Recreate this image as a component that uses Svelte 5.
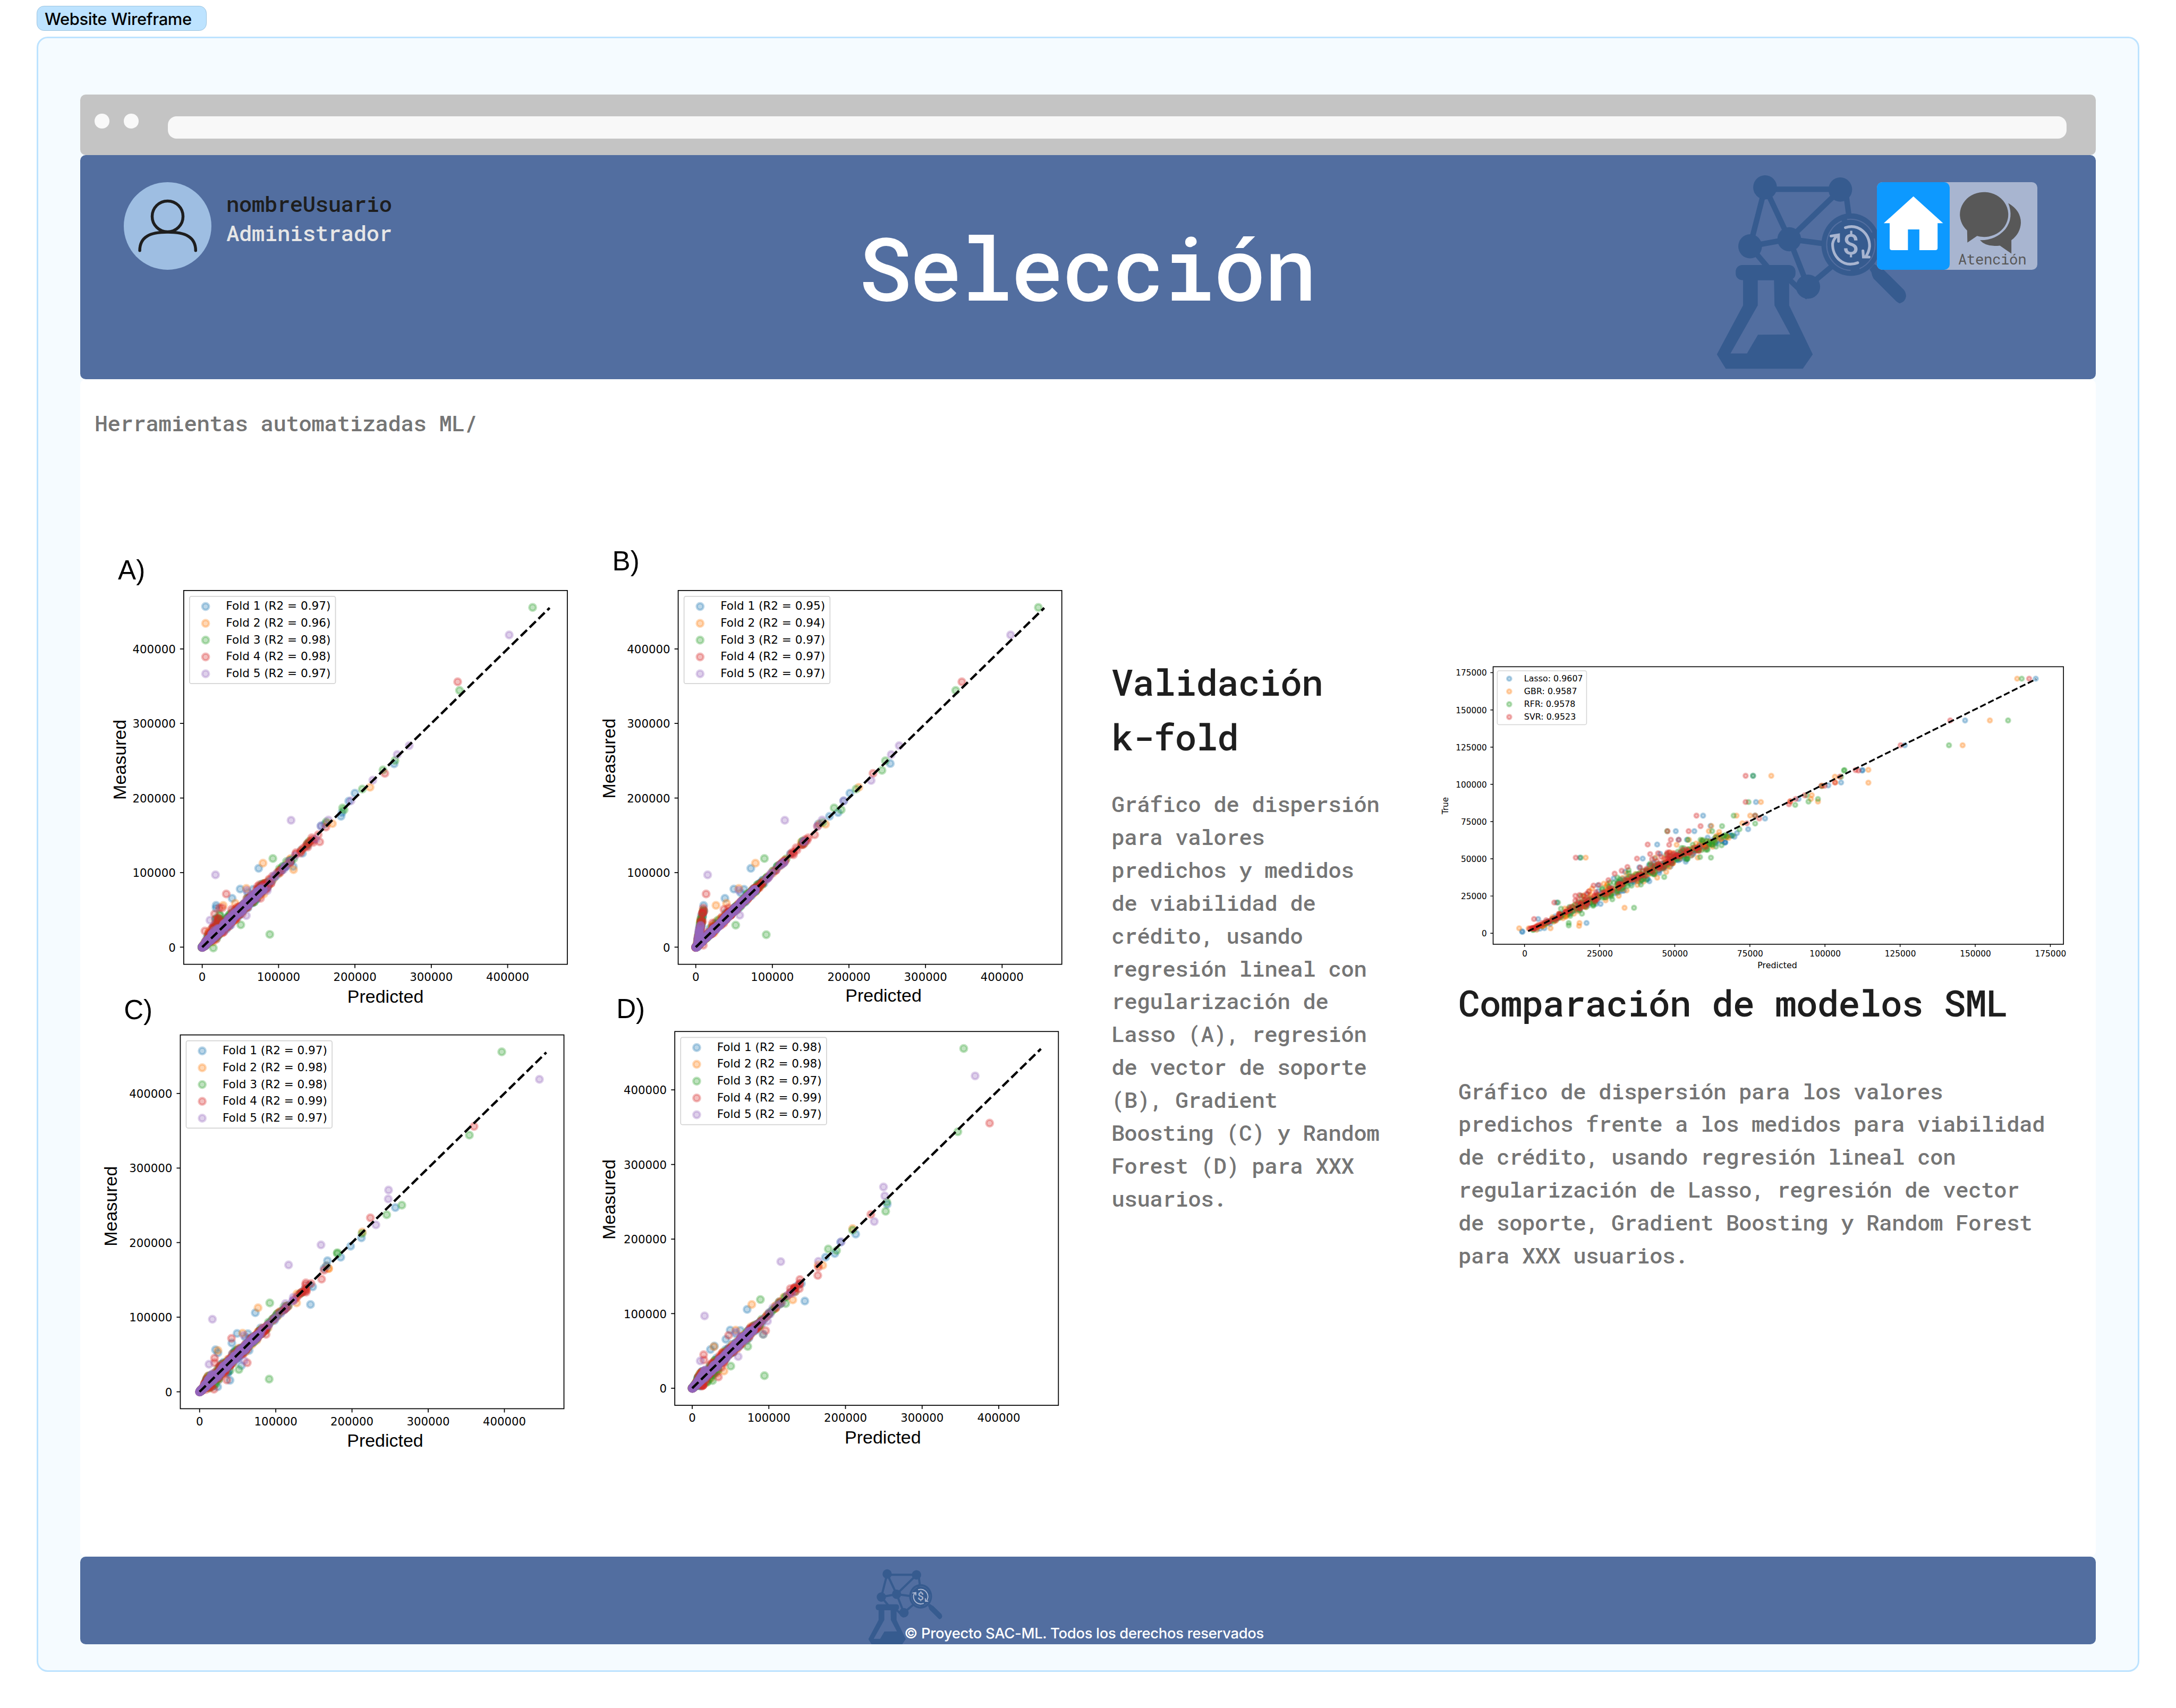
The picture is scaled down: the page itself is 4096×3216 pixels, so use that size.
<script>
  const COLORS = ['#1f77b4', '#ff7f0e', '#2ca02c', '#d62728', '#9467bd'];

  // Small deterministic generator so that the clouds are stable between renders
  function rng(seed) {
    let s = seed;
    return () => {
      s = (s * 1664525 + 1013904223) % 4294967296;
      return s / 4294967296;
    };
  }
  function gauss(r) {
    return Math.sqrt(-2 * Math.log(r() + 1e-9)) * Math.cos(6.28318 * r());
  }

  const panels = [
    {
      id: 'A', lx: 57, ly: 132, bx: 270, by: 168.5, zx: 330, zy: 1325, kx: 247.5, px: 924, py: 1505, mx: 82, my: 717, seed: 11, spread: 1, column: false,
      r2: ['0.97', '0.96', '0.98', '0.98', '0.97'],
      pts: [
        [513,1069,453,1136,427,1166,375,1189,375,1198,495,1137,477,1147,825,825,805,851,780,900,783,888,952,730,728,925,715,931,625,1063,655,1020,520,1128],
        [527,1052,473,1134,626,1073,874,806,752,924,398,1189,437,1182,735,922,617,1037],
        [1401,223,1164,492,559,1037,549,1283,455,1252,366,1327,916,750,955,719,849,812,785,873,790,879,732,918,676,982,580,1070,386,1219,388,1222],
        [1158,464,408,1152,922,761,731,935,706,960,711,983,685,970,634,1018,370,1217,395,1197,425,1202,339,1272,690,985,672,1000,386,1197,519,1166],
        [1325,312,618,913,373,1090,1001,671,962,700,883,783,812,850,739,912,715,932,473,1222,541,1141,355,1237,475,1140]
      ]
    },
    {
      id: 'B', lx: 63, ly: 103, bx: 276.5, by: 168.5, zx: 333.5, zy: 1325, kx: 248.25, px: 942, py: 1502, mx: 73, my: 713, seed: 23, spread: 0.45, column: true,
      r2: ['0.95', '0.94', '0.97', '0.97', '0.97'],
      pts: [
        [512,1069,457,1136,428,1166,359,1189,490,1137,479,1148,833,825,813,850,795,888,767,900,964,729,640,1022,731,925],
        [527,1052,473,1134,399,1189,433,1182,862,806,754,926,735,925],
        [1444,223,1176,492,556,1037,562,1284,463,1253,948,720,937,751,853,812,782,873,805,879,745,920,680,980],
        [1196,464,367,1152,908,761,719,960,358,1198,728,933,698,970,689,975,425,1202,440,1197,358,1318,650,1025,388,1246],
        [1354,312,622,913,372,1090,993,671,967,700,902,784,813,850,743,912,728,932,476,1221,473,1140]
      ]
    },
    {
      id: 'C', lx: 76, ly: 109, bx: 259, by: 159.5, zx: 321.5, zy: 1316.5, kx: 247, px: 923, py: 1495, mx: 54, my: 715, seed: 37, spread: 0.75, column: false,
      r2: ['0.97', '0.98', '0.98', '0.99', '0.97'],
      pts: [
        [502,1060,443,1127,426,1158,373,1180,381,1190,478,1128,470,1140,681,1033,688,976,779,880,736,891,811,844,846,817,956,719,457,1231,420,1279,380,1300,725,916,482,1182],
        [511,1044,461,1126,849,798,739,916,636,1028,381,1182,447,1175,740,917],
        [1301,214,1196,484,549,1028,547,1275,449,1244,977,711,928,742,848,803,768,865,768,868,733,908],
        [1211,456,425,1143,875,752,717,951,666,963,476,1222,370,1207,667,993,368,1308,410,1278,537,1130,370,1222,665,970,725,922,640,1005],
        [1423,303,610,905,363,1081,934,662,933,691,893,775,715,840,733,908,466,1215,465,1133,352,1227,625,1010,600,1030]
      ]
    },
    {
      id: 'D', lx: 76, ly: 105, bx: 265.5, by: 148.5, zx: 322, zy: 1305, kx: 248.4, px: 940, py: 1485, mx: 73, my: 693, seed: 53, spread: 0.75, column: false,
      r2: ['0.98', '0.98', '0.97', '0.99', '0.97'],
      pts: [
        [500,1049,445,1116,431,1146,394,1168,381,1179,478,1117,687,1022,463,1128,852,805,803,831,784,868,754,880,954,708,676,965],
        [515,1033,463,1116,842,787,745,906,648,1018,425,1249,392,1170,730,905],
        [1202,203,1183,473,543,1017,556,1264,447,1233,953,701,949,731,842,792,763,853,790,858,502,1169,625,1030,655,992,388,1280,552,1130],
        [1286,445,440,1133,901,741,729,939,671,952,560,1118,359,1196,669,982,360,1213,353,1298,407,1268,731,912,640,982,670,965],
        [1239,292,609,894,362,1070,942,652,946,681,912,764,805,830,731,893,471,1202,566,1087,552,1130,348,1216,463,1122,495,1150]
      ]
    }
  ];

  function pairs(flat, sx = 1, sy = 1) {
    const out = [];
    for (let i = 0; i < flat.length; i += 2) out.push([flat[i] * sx, flat[i + 1] * sy]);
    return out;
  }

  const KY = 241.8;

  // Dense part of each fold: values in thousands along the diagonal
  function foldCloud(p) {
    const r = rng(p.seed);
    return p.pts.map((flat, f) => {
      const out = [];
      const put = (pred, val) => out.push([p.zx + (pred * p.kx) / 100, p.zy - (val * KY) / 100]);
      const tight = f === 4;
      for (let i = 0; i < (tight ? 460 : 200); i++) {
        const v = (tight ? 78 : 86) * Math.pow(r(), 1.35);
        put(v + gauss(r) * (tight ? 2.1 : 3.2) * p.spread * Math.min(1, 0.1 + v / 20), v);
      }
      for (let i = 0; i < 15; i++) {
        const v = 72 + r() * 46;
        put(v + gauss(r) * 1.7 * p.spread, v + (f === 2 ? 1 : 0));
      }
      for (let i = 0; i < (f === 3 ? 9 : 2); i++) {
        const v = 122 + r() * 24;
        put(v + gauss(r) * 1.7, v);
      }
      if (p.column) {
        for (let i = 0; i < 28; i++) {
          const v = (tight ? 30 : 50) * r();
          put(1.5 + v * 0.16 + gauss(r) * 0.6, v);
        }
        if (!tight) for (let i = 0; i < 8; i++) { const v = 24 + r() * 26; put(v - 2 - r() * 6, v); }
      } else if (!tight) {
        const wide = p.id === 'A';
        for (let i = 0; i < (wide ? 18 : 14); i++) {
          const v = 7 + r() * (wide ? 34 : 16);
          put(Math.max(1.5, v * (wide ? 0.42 : 0.5) + r() * (wide ? 9 : 6)), v);
        }
        for (let i = 0; i < (wide ? 4 : 8); i++) {
          const v = 3 + r() * (wide ? 35 : 26);
          put(v + 4 + r() * (wide ? 4 : 8), v);
        }
        for (let i = 0; i < 8; i++) {
          const v = 30 + r() * 28;
          put(v - 3 - r() * 6, v);
        }
      } else {
        for (let i = 0; i < 20; i++) { const v = 5 + r() * 20; put(v * 0.65 + 1, v); }
      }
      return out.concat(pairs(flat));
    });
  }
  const foldPlots = panels.map((p) => ({ ...p, folds: foldCloud(p) }));
  const ticks = [0, 100000, 200000, 300000, 400000];

  // Model comparison chart
  const models = ['Lasso: 0.9607', 'GBR: 0.9587', 'RFR: 0.9578', 'SVR: 0.9523'];
  const modelFlat = [
    [1459,91,1288,266,1142,370,1040,474,1039,476,988,526,775,498,957,538,782,608,654,665,804,677,588,730,633,730,543,786,672,708,763,722,356,841,508,845,300,1029,217,1152,216,1150,372,1115,255,1098,736,738,885,595,595,766,615,766,550,825,612,858,524,940,406,1035,523,872,535,865],
    [1414,91,1348,266,1282,370,1054,473,1054,527,819,498,794,608,917,579,915,595,932,606,370,841,464,1051,209,1137,285,1137,232,1137,355,1115,354,1127,735,665,768,665,668,730,693,733,674,708,749,697,325,1058,543,925,641,841,973,502,590,787,620,766,942,540,865,606,974,526],
    [1425,91,1392,266,1249,370,996,474,995,476,775,498,764,608,932,595,909,606,728,665,700,709,676,730,567,730,780,698,742,722,673,841,487,1051,329,1115,329,1125,358,841,358,1001,303,1029,617,766,648,766,560,922,361,1076,629,787,388,1043,780,665,877,620,905,580,410,970,941,541,988,502],
    [1443,91,1252,266,1132,370,1023,474,1030,476,757,498,757,608,638,665,648,709,568,730,619,730,576,766,520,786,572,787,346,841,494,845,526,826,545,823,345,1001,345,1021,294,1029,245,1098,389,958,377,983,440,908,425,935,457,896,471,880,780,665,790,677,305,1076,595,766,402,955,567,825,760,697,865,605,862,617,878,595,900,580,940,540,948,540,973,526,985,502]
  ];
  const r5 = rng(97);
  const shift = [0.9, 0.6, 0.9, -0.3];
  const modelPts = modelFlat.map((flat, m) => {
    const out = [];
    for (let i = 0; i < 150; i++) {
      const v = 2 + (m === 3 ? 58 : 64) * Math.pow(r5(), 0.95);
      const pred = v + shift[m] + gauss(r5) * (m === 3 ? 1.6 : 2.3) * Math.min(1, 0.2 + v / 28);
      out.push([201 + pred * 6.584, 605.6 - v * 3.264]);
    }
    for (let i = 0; i < 14; i++) {
      const v = 24 + r5() * 32;
      out.push([201 + (v - 2 - r5() * 6) * 6.584, 605.6 - v * 3.264]);
    }
    return out.concat(pairs(flat, 0.9056, 0.523));
  });
  const modelTicks = [0, 25000, 50000, 75000, 100000, 125000, 150000, 175000];

  const kfoldText = `Gráfico de dispersión
para valores
predichos y medidos
de viabilidad de
crédito, usando
regresión lineal con
regularización de
Lasso (A), regresión
de vector de soporte
(B), Gradient
Boosting (C) y Random
Forest (D) para XXX
usuarios.`;
  const modelsText = `Gráfico de dispersión para los valores
predichos frente a los medidos para viabilidad
de crédito, usando regresión lineal con
regularización de Lasso, regresión de vector
de soporte, Gradient Boosting y Random Forest
para XXX usuarios.`;
</script>

{#snippet logo()}
  <g fill="#365b8f" stroke="none">
    <g stroke="#365b8f" stroke-width="12" fill="none">
      <path d="M167 75H332M167 71 134 200M167 71 220 184M332 76 220 184M343 75 353 150M134 200 220 184M220 184 310 196M220 184 261 288M261 288 330 230M134 200 185 260M215 268 261 312" />
    </g>
    <ellipse cx="167" cy="70.7" rx="26" ry="26.5" />
    <ellipse cx="331.8" cy="75.5" rx="26" ry="26.5" />
    <ellipse cx="134.3" cy="200" rx="26" ry="26.5" />
    <ellipse cx="220" cy="184.5" rx="26" ry="26.5" />
    <ellipse cx="261.2" cy="288.3" rx="26.5" ry="26.5" />
    <ellipse cx="355" cy="196.3" rx="64.5" ry="68.6" />
    <path d="M406.4 239 427.6 252 471 295Q476 301 476 310Q474 322 462 325Q456 323 450.6 316.7L404.7 270.7Q401 264 400 256.7L396 250.7Z" />
    <rect x="102.7" y="241" width="131" height="33" rx="14" />
    <path fill-rule="evenodd" d="M118.8 270H219.8V329.3L271.5 436.7 249.7 468.3H80.9L61.4 436.7 118.8 329.3ZM151 274V329.3L91.3 434.7H127.4L151.5 393.8 222.1 393.3 187.7 329.3 186.6 274Z" />
  </g>
  <ellipse cx="355" cy="196.5" rx="53" ry="56" fill="none" stroke="#526ea0" stroke-width="2.4" stroke-dasharray="66 20 150 12 66 14 20" />
  <g fill="none" stroke="#a8b5d0" stroke-width="6" stroke-linecap="round">
    <path d="M343 159C372 150 396 172 396 200Q395 212 388 222M370 236C338 248 314 222 315 194Q317 184 324 178M311.5 177.5 328 175 328 189M381.5 210 382.5 223.5 395 223.5" />
  </g>
  <text x="355" y="218" text-anchor="middle" font-weight="500" font-size="63">$</text>
{/snippet}

<div class="screen">
  <div class="tag">Website Wireframe</div>
  <div class="frame">
    <div class="chrome">
      <i class="dot"></i>
      <i class="dot"></i>
      <div class="url"></div>
    </div>
    <header>
      <svg class="mark" viewBox="0 0 500 492">{@render logo()}</svg>
      <div class="user">
        <svg class="avatar" viewBox="0 0 192 192">
          <circle cx="96" cy="96" r="96" fill="#9ebee2" />
          <g fill="none" stroke="#1e1e1e" stroke-width="6.4" stroke-linecap="round">
            <circle cx="96" cy="75" r="33.8" />
            <path d="M35 150C35 120 57 109.5 96 109.5S157.500 120 157.500 150" />
          </g>
        </svg>
        <div class="who">
          <div class="name">nombreUsuario</div>
          <div class="role">Administrador</div>
        </div>
      </div>
      <h1>Selección</h1>
      <div class="actions">
        <div class="home">
          <svg viewBox="0 0 160 192"><path fill="#fff" d="M80 31 145 90H133V144Q133 149 128 149H93V103.500H68V149H33Q28 149 28 144V90H15Z" /></svg>
        </div>
        <div class="help">
          <svg viewBox="0 0 192 192">
            <g fill="#585858">
              <path d="M38.200 106A53 49.200 0 1 1 60 118L38.800 132.300Z" />
              <path d="M128.300 46Q156 62 156 89Q155 112 135.200 127.300V156.700L110 139Q80 143 66.300 127.300Q100 128 122 103Q141 78 128.300 46Z" />
            </g>
          </svg>
          <span>Atención</span>
        </div>
      </div>
    </header>
    <main>
      <p class="crumb">Herramientas automatizadas ML/</p>
      <div class="content">
        <div class="folds">
          {#each foldPlots as p}
            <svg class="fold" viewBox="0 0 1568 1449.700">
              <text class="arial letter" x={p.lx} y={p.ly}>{p.id})</text>
              {#each p.folds as pts, f}
                <g class="pt" fill={COLORS[f]} stroke={COLORS[f]}>
                  {#each pts as [x, y]}<circle cx={x.toFixed(1)} cy={(y + 0.5).toFixed(1)} r="10.800" />{/each}
                </g>
              {/each}
              <line class="fit" x1={p.zx} y1={p.zy} x2={p.zx + p.kx * 4.55} y2={p.zy - KY * 4.55} />
              <rect class="axes" x={p.bx} y={p.by} width="1243.500" height="1212" />
              {#each ticks as t}
                <path class="tick" d="M{p.zx + (p.kx * t) / 1e5} {p.by + 1212}v12M{p.bx} {p.zy - (KY * t) / 1e5}h-12" />
                <text x={p.zx + (p.kx * t) / 1e5} y={p.by + 1266} text-anchor="middle">{t}</text>
                <text x={p.bx - 26} y={p.zy - (KY * t) / 1e5 + 14} text-anchor="end">{t}</text>
              {/each}
              <rect class="legend" x={p.bx + 19} y={p.by + 19} width="473" height="283" rx="6" />
              {#each p.r2 as v, i}
                <g class="pt" fill={COLORS[i]} stroke={COLORS[i]}><circle cx={p.bx + 71} cy={p.by + 52 + i * 54.500} r="10.800" /></g>
                <text class="key" x={p.bx + 137} y={p.by + 63 + i * 54.500}>Fold {i + 1} (R2 = {v})</text>
              {/each}
              <text class="arial" x={p.px} y={p.py} text-anchor="middle">Predicted</text>
              <text class="arial" transform="translate({p.mx} {p.my}) rotate(-90)" text-anchor="middle">Measured</text>
            </svg>
          {/each}
        </div>
        <section class="kfold">
          <h2>Validación<br />k-fold</h2>
          <p>{kfoldText}</p>
        </section>
        <section class="models">
          <svg class="compare" viewBox="0 0 1420 700">
            {#each modelPts as pts, m}
              <g class="pt small" fill={COLORS[m]} stroke={COLORS[m]}>
                {#each pts as [x, y]}<circle cx={x.toFixed(1)} cy={y.toFixed(1)} r="4.800" />{/each}
              </g>
            {/each}
            <line class="fit thin" x1="209" y1="601" x2="1322" y2="48.500" />
            <rect class="axes thin" x="132.200" y="21.400" width="1249.800" height="608.300" />
            {#each modelTicks as t}
              <path class="tick thin" d="M{201 + (t / 25000) * 164.600} 629.700v6M132.200 {605.600 - (t / 25000) * 81.600}h-6" />
              <text x={201.5 + (t / 25000) * 164.600} y="656.500" text-anchor="middle">{t}</text>
              <text x="118.500" y={612.500 - (t / 25000) * 81.600} text-anchor="end">{t}</text>
            {/each}
            <rect class="legend thin" x="141.300" y="30.300" width="195.700" height="118.200" rx="4" />
            {#each models as name, i}
              <g class="pt small" fill={COLORS[i]} stroke={COLORS[i]}><circle cx="167.500" cy={47.600 + i * 28} r="4.800" /></g>
              <text class="key" x="200" y={53 + i * 28}>{name}</text>
            {/each}
            <text class="key" x="755" y="682.500" text-anchor="middle">Predicted</text>
            <text transform="translate(34 326) rotate(-90)" text-anchor="middle">True</text>
          </svg>
          <h2>Comparación de modelos SML</h2>
          <p>{modelsText}</p>
        </section>
      </div>
    </main>
    <footer>
      <svg class="mark" viewBox="0 0 500 492">{@render logo()}</svg>
      <span>© Proyecto SAC-ML. Todos los derechos reservados</span>
    </footer>
  </div>
</div>

<style>
  /* 1rem is one hundred design units */
  :global(html) { font-size: 85.906px; }
  :global(body) { margin: 0; background: #fff; }
  .screen {
    box-sizing: border-box;
    width: 47.68rem;
    height: 37.43rem;
    padding: 0.125rem 0.8rem 0;
    overflow: hidden;
    font-family: 'Roboto Mono', 'DejaVu Sans Mono', monospace;
    font-size: 0.48rem;
    font-weight: 500;
    letter-spacing: -0.0086rem;
  }
  .tag {
    box-sizing: border-box;
    width: 3.73rem;
    height: 0.555rem;
    padding-left: 0.165rem;
    border: 0.02rem solid #9cc3df;
    border-radius: 0.16rem;
    background: #bde3ff;
    font: 500 0.36rem/0.57rem Inter, sans-serif;
    letter-spacing: -0.004rem;
    white-space: nowrap;
  }
  .frame {
    box-sizing: border-box;
    height: 35.84rem;
    margin-top: 0.12rem;
    padding: 1.24rem 0.92rem 0;
    border: 0.04rem solid #bde3ff;
    border-radius: 0.24rem;
    background: #f5fbff;
  }
  .chrome {
    display: flex;
    box-sizing: border-box;
    height: 1.32rem;
    padding: 0.42rem 0.64rem 0 0.32rem;
    border-radius: 0.12rem;
    background: #c4c4c4;
  }
  .dot {
    width: 0.32rem;
    height: 0.32rem;
    margin-right: 0.32rem;
    border-radius: 50%;
    background: #f9f9f9;
  }
  .url {
    flex: 1;
    height: 0.48rem;
    margin: 0.06rem 0 0 0.32rem;
    border-radius: 0.19rem;
    background: #f8f8f8;
  }
  header {
    position: relative;
    display: grid;
    grid-template-columns: 1fr auto 1fr;
    height: 4.92rem;
    border-radius: 0.12rem;
    background: #526ea0;
  }
  header .mark {
    position: absolute;
    top: 0;
    right: 3.92rem;
    width: 5rem;
    height: 4.92rem;
  }
  .user {
    display: flex;
    gap: 0.32rem;
    padding: 0.6rem 0 0 0.96rem;
  }
  .avatar { width: 1.92rem; height: 1.92rem; }
  .who { line-height: 0.64rem; padding-top: 0.152rem; }
  .name { color: #1e1e1e; }
  .role { color: #e6e6e6; }
  h1 {
    margin: -0.01rem 0 0 -0.05rem;
    font-size: 1.92rem;
    font-weight: 500;
    line-height: 4.92rem;
    letter-spacing: -0.042rem;
    color: #fff;
  }
  .actions {
    position: relative;
    display: flex;
    justify-self: end;
    width: 3.52rem;
    height: 1.92rem;
    margin: 0.6rem 1.28rem 0 0;
    border-radius: 0.12rem;
    background: #a8b5d0;
  }
  .home { width: 1.6rem; border-radius: 0.12rem; background: #0d99ff; }
  .home svg { display: block; width: 1.6rem; height: 1.92rem; }
  .help { position: relative; width: 1.92rem; }
  .help svg { display: block; width: 1.92rem; height: 1.92rem; }
  .help span {
    position: absolute;
    left: 0.18rem;
    bottom: 0;
    font-size: 0.32rem;
    font-weight: 400;
    line-height: 0.48rem;
    letter-spacing: -0.005rem;
    color: #585858;
  }
  main {
    box-sizing: border-box;
    height: 25.8rem;
    border-radius: 0.12rem;
    background: #fff;
    overflow: hidden;
  }
  .crumb { margin: 0; padding: 0.605rem 0 0 0.32rem; line-height: 0.72rem; color: #757575; }
  .content {
    display: grid;
    grid-template-columns: 22.16rem 7.04rem 1fr;
    margin: 2.162rem 0 0 0.44rem;
  }
  .folds { display: grid; grid-template-columns: 10.8rem 10.8rem; grid-auto-rows: 9.8rem; }
  .fold { width: 10.6rem; height: 9.8rem; overflow: visible; }
  svg text { font-family: 'DejaVu Sans', sans-serif; font-weight: 400; letter-spacing: 0; fill: #000; }
  .fold text { font-size: 36.6px; }
  .fold text.key { font-size: 37.1px; }
  .fold text.arial { font-family: 'Liberation Sans', Arial, sans-serif; font-size: 58.5px; }
  .fold text.letter { font-size: 88px; }
  .compare text { font-size: 17.9px; }
  .compare text.key { font-size: 18.5px; }
  .mark text { font-family: Roboto, sans-serif; font-weight: 500; fill: #a8b5d0; }
  .pt { fill-opacity: 0.3; stroke-opacity: 0.3; stroke-width: 7.6; }
  .pt.small { stroke-width: 4.2; }
  .fit { stroke: #000; stroke-width: 7.7; stroke-dasharray: 28 12.1; }
  .fit.thin { stroke-width: 3.9; stroke-dasharray: 13.5 5.9; }
  .axes { fill: none; stroke: #000; stroke-width: 3; }
  .axes.thin { stroke-width: 1.9; }
  .tick { stroke: #000; stroke-width: 3; }
  .tick.thin { stroke-width: 1.7; }
  .legend { fill: #fff; fill-opacity: 0.8; stroke: #d4d4d4; stroke-width: 3; }
  .legend.thin { stroke-width: 1.8; }
  h2 {
    margin: 0;
    font-size: 0.8rem;
    font-weight: 500;
    line-height: 1.2rem;
    letter-spacing: -0.0175rem;
    color: #1e1e1e;
    white-space: nowrap;
  }
  section p { margin: 0; line-height: 0.72rem; color: #757575; white-space: pre; }
  .kfold { padding-top: 2.535rem; }
  .kfold p { margin-top: 0.53rem; }
  .models { padding-top: 2.6rem; }
  .compare { display: block; width: 14.2rem; height: 7rem; }
  .models h2 { padding-left: 0.56rem; margin-top: -0.03rem; }
  .models p { padding-left: 0.56rem; margin-top: 0.985rem; }
  footer {
    position: relative;
    height: 1.92rem;
    border-radius: 0.12rem;
    background: #526ea0;
    overflow: hidden;
  }
  footer .mark {
    position: absolute;
    left: 17.03rem;
    top: 0.105rem;
    width: 1.95rem;
    height: 1.919rem;
  }
  footer span {
    position: absolute;
    left: 18.06rem;
    bottom: -0.01rem;
    font: 500 0.32rem/0.48rem Inter, sans-serif;
    letter-spacing: -0.004rem;
    color: #fff;
    white-space: nowrap;
  }
</style>
